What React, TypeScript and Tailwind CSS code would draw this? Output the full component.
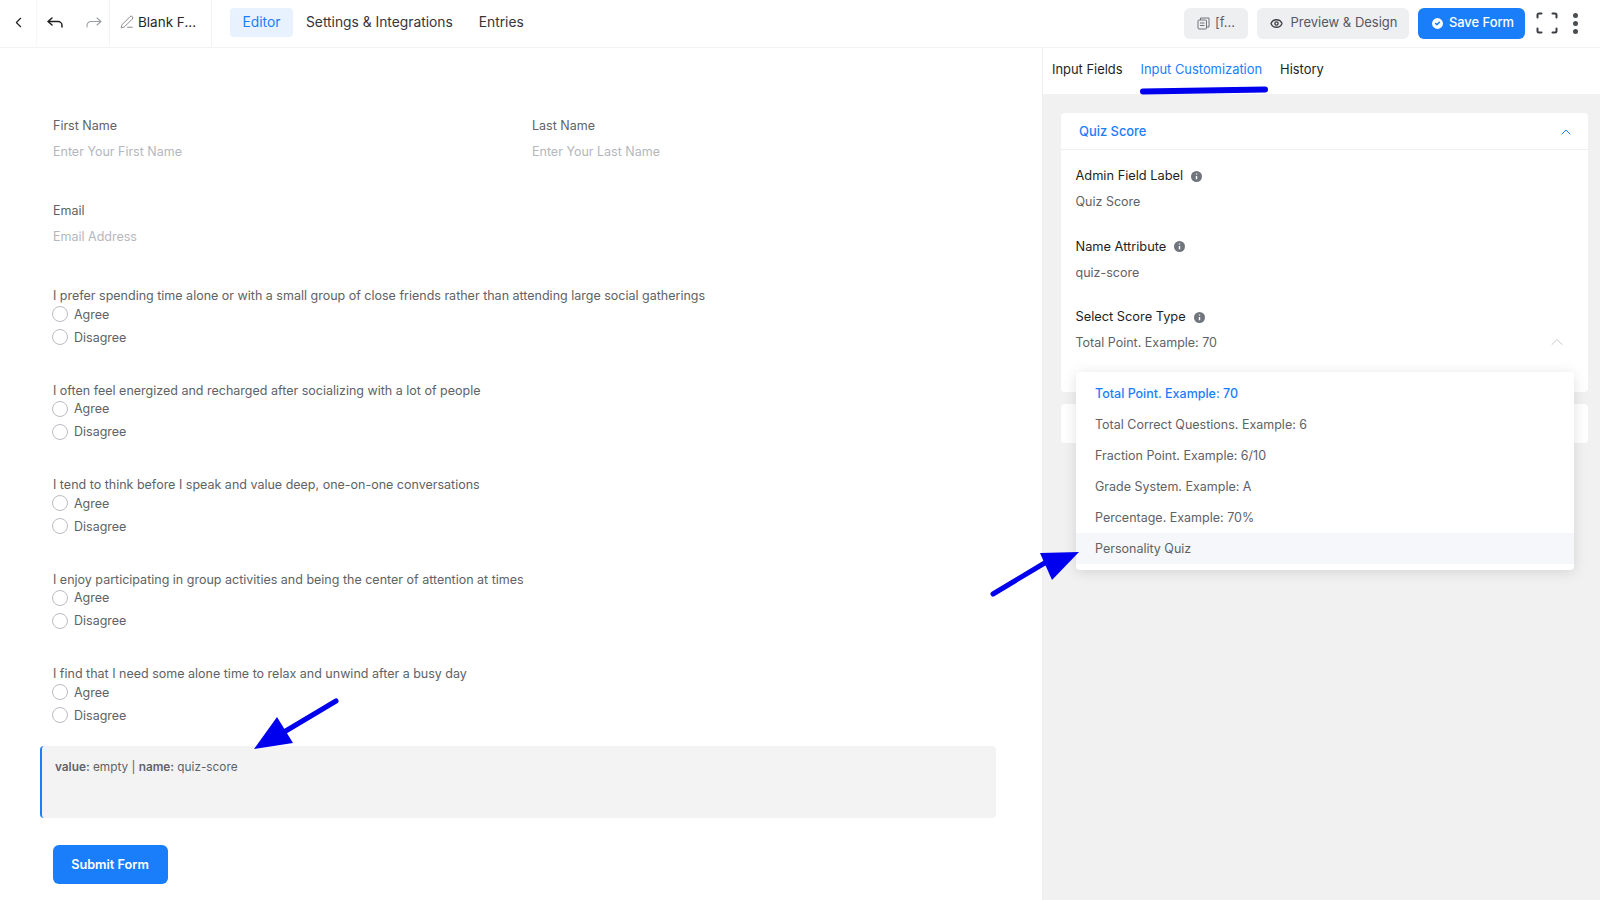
import { ChevronLeft, ChevronUp, PenLine, Eye, CircleCheck } from "lucide-react";

const questions = [
  "I prefer spending time alone or with a small group of close friends rather than attending large social gatherings",
  "I often feel energized and recharged after socializing with a lot of people",
  "I tend to think before I speak and value deep, one-on-one conversations",
  "I enjoy participating in group activities and being the center of attention at times",
  "I find that I need some alone time to relax and unwind after a busy day",
];

const scoreTypes = [
  "Total Point. Example: 70",
  "Total Correct Questions. Example: 6",
  "Fraction Point. Example: 6/10",
  "Grade System. Example: A",
  "Percentage. Example: 70%",
  "Personality Quiz",
];

function Radio({ label }: { label: string }) {
  return (
    <div className="flex h-[20px] items-center">
      <span className="-ml-[1px] mb-[2px] h-[16px] w-[16px] rounded-full border border-[#b9bcc2] bg-white" />
      <span className="ml-[6px] text-[12.5px] text-[#606266]">{label}</span>
    </div>
  );
}

function InfoDot() {
  return (
    <svg width="11" height="11" viewBox="0 0 11 11">
      <circle cx="5.500" cy="5.500" r="5.500" fill="#70757d" />
      <path d="M5.500 5v3.200M5.500 2.600v1" stroke="#ffffff" strokeWidth="1.400" />
    </svg>
  );
}

function TextField({ label, placeholder, className }: { label: string; placeholder: string; className?: string }) {
  return (
    <div className={className}>
      <div className="h-[18px] text-[12.5px] leading-[18px] text-[#606266]">{label}</div>
      <div className="mt-[8px] h-[18px] text-[12.5px] leading-[18px] text-[#b4b7bd]">{placeholder}</div>
    </div>
  );
}

function SettingField({ label, value, className }: { label: string; value: string; className?: string }) {
  return (
    <div className={className}>
      <div className="flex h-[18px] items-center gap-[8px] text-[12.800px] leading-[18px] text-[#1e1f21]">
        {label}
        <InfoDot />
      </div>
      <div className="mt-[8px] h-[18px] text-[12.5px] leading-[18px] text-[#606266]">{value}</div>
    </div>
  );
}

export default function App() {
  return (
    <div className="relative flex h-[900px] w-[1600px] flex-col overflow-hidden bg-white font-['Inter',sans-serif]">
      {/* Top bar */}
      <header className="flex h-[48px] shrink-0 items-center border-b border-[#f2f3f4] bg-white pb-[3px]">
        <div className="flex h-[47px] w-[37px] items-center justify-center border-r border-[#f7f7f8]">
          <ChevronLeft size={17} strokeWidth={1.6} className="text-[#1e1f21]" />
        </div>
        <div className="flex h-[47px] w-[73px] items-center gap-[23px] border-r border-[#f2f3f4] pl-[10px]">
          <svg width="16" height="11" viewBox="0 0 16 11" fill="none" stroke="#1e1f21" strokeWidth="1.500" strokeLinecap="round" strokeLinejoin="round">
            <path d="M5 1 1 4.500 5 8M1 4.500h10a4 4 0 0 1 4 4V10" />
          </svg>
          <svg width="16" height="11" viewBox="0 0 16 11" fill="none" stroke="#9a9ea5" strokeWidth="1.100" strokeLinecap="round" strokeLinejoin="round">
            <path d="M11 1l4 3.500L11 8M15 4.500H5a4 4 0 0 0-4 4V10" />
          </svg>
        </div>
        <div className="flex h-[47px] w-[102px] items-center gap-[4px] border-r border-[#f2f3f4] pl-[10px] text-[13.500px] text-[#26282b]">
          <PenLine size={14} strokeWidth={1.2} className="text-[#55585e]" />
          Blank F...
        </div>
        <nav className="ml-[18px] flex items-center text-[13.8px] text-[#34363a]">
          <div className="flex h-[29px] w-[63px] items-center justify-center rounded-[4px] bg-[#e8f2fe] text-[#1a7efb]">Editor</div>
          <div className="ml-[13px]">Settings &amp; Integrations</div>
          <div className="ml-[26px]">Entries</div>
        </nav>
        <div className="ml-auto mt-[2px] flex items-center">
          <div className="flex h-[31px] w-[64px] items-center justify-center gap-[5px] rounded-[6px] bg-[#eeeff0] text-[13px] text-[#606266]">
            <svg width="13" height="13" viewBox="0 0 13 13" fill="none" stroke="#70747a" strokeWidth="1">
              <rect x="1" y="3" width="8.500" height="9" rx="1" />
              <path d="M3.500 3V1h8.500v9H9.500M3 6h4.500M3 8.500h4.500" />
            </svg>
            [f...
          </div>
          <div className="ml-[9px] flex h-[31px] w-[152px] items-center justify-center gap-[7px] rounded-[6px] bg-[#eeeff0] pl-[2px] text-[13px] text-[#55585e]">
            <Eye size={13} strokeWidth={2.5} className="text-[#3c3f44]" />
            Preview &amp; Design
          </div>
          <div className="ml-[9px] flex h-[31px] w-[107px] items-center justify-center gap-[4px] rounded-[6px] bg-[#1a7efb] pl-[1px] text-[12.900px] font-medium text-white">
            <CircleCheck size={15} fill="#ffffff" stroke="#1a7efb" strokeWidth={2.5} />
            Save Form
          </div>
          <svg className="ml-[11px]" width="22" height="22" viewBox="0 0 22 22" fill="none" stroke="#3a3d42" strokeWidth="2" strokeLinecap="round" strokeLinejoin="round">
            <path d="M1.500 5.500V3A1.500 1.500 0 0 1 3 1.500h2.500M16.500 1.500H19A1.500 1.500 0 0 1 20.500 3v2.500M20.500 16.500V19a1.500 1.500 0 0 1-1.500 1.500h-2.500M5.500 20.500H3A1.500 1.500 0 0 1 1.500 19v-2.500" />
          </svg>
          <div className="ml-[15px] mr-[22px] flex flex-col gap-[3px]">
            <span className="h-[5px] w-[5px] rounded-full bg-[#4a4d52]" />
            <span className="h-[5px] w-[5px] rounded-full bg-[#4a4d52]" />
            <span className="h-[5px] w-[5px] rounded-full bg-[#4a4d52]" />
          </div>
        </div>
      </header>

      <div className="flex min-h-0 flex-1">
        {/* Form canvas */}
        <main className="w-[1042px] shrink-0 pl-[53px] pt-[69px]">
          <div className="flex">
            <TextField className="w-[479px]" label="First Name" placeholder="Enter Your First Name" />
            <TextField label="Last Name" placeholder="Enter Your Last Name" />
          </div>
          <TextField className="mt-[41px]" label="Email" placeholder="Email Address" />
          <div className="mt-[42px] flex flex-col gap-[34.500px]">
            {questions.map((question) => (
              <div key={question}>
                <div className="h-[17px] text-[12.5px] leading-[16px] text-[#606266]">{question}</div>
                <Radio label="Agree" />
                <div className="mt-[3px]">
                  <Radio label="Disagree" />
                </div>
              </div>
            ))}
          </div>
          <div className="-ml-[13px] mt-[20px] h-[72px] w-[956px] rounded-[4px] border-l-2 border-[#1a7efb] bg-[#f3f3f4] pl-[13px] pt-[13px] text-[11.800px] leading-[16px] text-[#606266]">
            <span className="font-semibold">value:</span> empty | <span className="font-semibold">name:</span> quiz-score
          </div>
          <div className="-ml-[0.500px] mt-[27px] flex h-[39px] w-[115px] items-center justify-center rounded-[6px] bg-[#1a7efb] text-[12.700px] font-semibold text-white">
            Submit Form
          </div>
        </main>

        {/* Sidebar */}
        <aside className="flex min-w-0 flex-1 flex-col border-l border-[#eeeeef]">
          <div className="flex h-[46px] shrink-0 items-center gap-[18px] pb-[2px] pl-[9px] text-[12.900px] text-[#1e1f21]">
            <span>Input Fields</span>
            <span className="text-[#1a7efb]">Input Customization</span>
            <span>History</span>
          </div>
          <div className="relative flex-1 bg-[#f1f1f1] pl-[18px] pr-[12px] pt-[19px]">
            <section className="h-[279px] rounded-[4px] bg-white">
              <div className="flex h-[37px] items-center justify-between border-b border-[#eeeff0] pl-[18px] pr-[14px] pt-[2px] text-[12.900px] font-medium text-[#1a7efb]">
                Quiz Score
                <ChevronUp size={16} strokeWidth={1.5} />
              </div>
              <div className="pl-[14.500px] pr-[15px] pt-[17px]">
                <SettingField label="Admin Field Label" value="Quiz Score" />
                <SettingField className="mt-[26.500px]" label="Name Attribute" value="quiz-score" />
                <div className="relative mt-[26.500px]">
                  <SettingField label="Select Score Type" value="Total Point. Example: 70" />
                  <ChevronUp size={20} strokeWidth={0.8} className="absolute right-[6px] top-[24px] text-[#a6a9af]" />
                </div>
              </div>
            </section>
            <section className="mt-[12px] h-[39px] rounded-[4px] bg-white" />

            {/* Open select menu */}
            <ul className="absolute left-[33px] top-[278px] w-[498px] rounded-[4px] bg-white pb-[6px] pt-[6px] text-[12.500px] text-[#606266] shadow-[0_2px_14px_rgba(0,0,0,0.12)]">
              {scoreTypes.map((type, index) => (
                <li
                  key={type}
                  className={`flex h-[31px] items-center pl-[19px] pt-[2px] ${index === 0 ? "font-medium text-[#1a7efb]" : ""} ${index === 5 ? "bg-[#f5f7fa]" : ""}`}
                >
                  {type}
                </li>
              ))}
            </ul>
          </div>
        </aside>
      </div>

      {/* Annotation strokes added on top of the screenshot */}
      <svg className="pointer-events-none absolute left-0 top-0" width="1600" height="900" viewBox="0 0 1600 900" fill="none">
        <path d="M1143 91.500 L1265 89.500" stroke="#0000ee" strokeWidth="6" strokeLinecap="round" />
        <path d="M993 594 L1048 561" stroke="#0000ee" strokeWidth="5" strokeLinecap="round" />
        <path d="M1079 552 L1040 553 L1052 580 Z" fill="#0000ee" />
        <path d="M336 701 L284 732" stroke="#0000ee" strokeWidth="5" strokeLinecap="round" />
        <path d="M254 749 L277 717 L293 743 Z" fill="#0000ee" />
      </svg>
    </div>
  );
}
